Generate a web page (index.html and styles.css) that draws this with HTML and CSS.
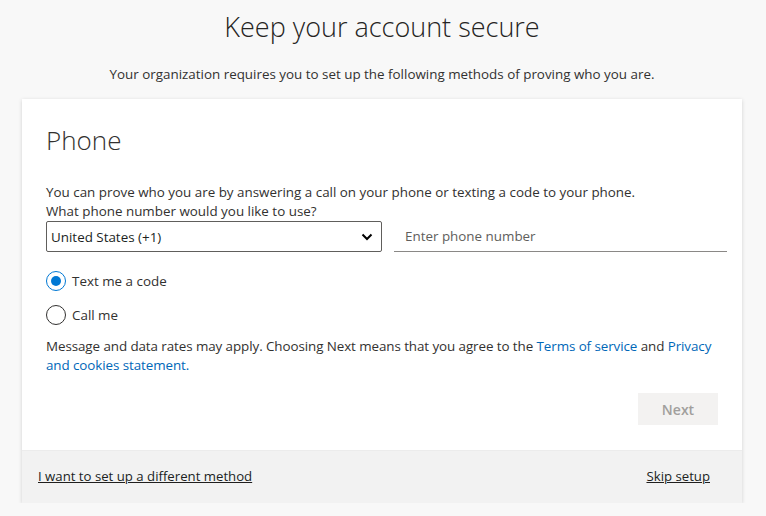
FILE: index.html
```html
<!DOCTYPE html>
<html lang="en">
<head>
  <meta charset="UTF-8" />
  <meta name="viewport" content="width=device-width, initial-scale=1.0" />
  <title>Keep your account secure</title>
  <link rel="stylesheet" href="styles.css">
</head>
<body>
  <div class="page">
    <header class="intro">
      <h1>Keep your account secure</h1>
      <p class="subtitle">Your organization requires you to set up the following methods of proving who you are.</p>
    </header>

    <div class="card">
      <div class="card-body">
        <h2>Phone</h2>
        <p class="lead">You can prove who you are by answering a call on your phone or texting a code to your phone.</p>
        <p class="question">What phone number would you like to use?</p>

        <div class="phone-row">
          <div class="country-select">
            <span>United States (+1)</span>
            <svg class="chevron" width="12" height="8" viewBox="0 0 12 8">
              <path d="M1.5 1.5 L6 6 L10.5 1.5" fill="none" stroke="#000" stroke-width="2"/>
            </svg>
          </div>
          <div class="phone-input">Enter phone number</div>
        </div>

        <label class="radio first">
          <span class="dot checked"></span>
          Text me a code
        </label>
        <label class="radio">
          <span class="dot"></span>
          Call me
        </label>

        <p class="terms">Message and data rates may apply. Choosing Next means that you agree to the <a href="#">Terms of service</a> and <a href="#">Privacy and cookies statement.</a></p>

        <div class="actions">
          <button class="next" disabled>Next</button>
        </div>
      </div>

      <footer class="card-footer">
        <a href="#">I want to set up a different method</a>
        <a href="#">Skip setup</a>
      </footer>
    </div>
  </div>
</body>
</html>
```

FILE: styles.css
```css
body {
  margin: 0;
  padding: 0;
  font-family: 'Segoe UI', 'Open Sans', 'Noto Sans', sans-serif;
  background-color: #f8f8f8;
  color: #323130;
  font-size: 13.4px;
}

.page {
  width: 720px;
  margin-left: 22px;
}

.intro {
  text-align: center;
}

h1 {
  margin: 0;
  padding-top: 8px;
  font-size: 27px;
  font-weight: 300;
  line-height: 38px;
  color: #252423;
}

.subtitle {
  margin: 18px 0 0;
  line-height: 20px;
}

.card {
  margin-top: 15px;
  background-color: #fff;
  box-shadow: 0 1px 4px rgba(0, 0, 0, 0.16);
}

.card-body {
  padding: 19px 24px 25px;
}

h2 {
  margin: 0;
  font-size: 26px;
  font-weight: 300;
  line-height: 44px;
  color: #323130;
}

.lead {
  margin: 21px 0 0;
  line-height: 19px;
}

.question {
  margin: 0;
  line-height: 19px;
}

.phone-row {
  display: flex;
  gap: 12px;
  margin-right: -9px;
}

.country-select {
  box-sizing: border-box;
  width: 336px;
  height: 31px;
  border: 1px solid #605e5c;
  border-radius: 2px;
  padding: 0 8px 0 4px;
  display: flex;
  align-items: center;
  justify-content: space-between;
  color: #201f1e;
}

.phone-input {
  flex: 1;
  box-sizing: border-box;
  height: 31px;
  border-bottom: 1px solid #8a8886;
  padding: 0 11px;
  display: flex;
  align-items: center;
  color: #605e5c;
}

.radio {
  display: flex;
  align-items: center;
  gap: 6px;
  height: 20px;
  margin-top: 14px;
}

.radio.first {
  margin-top: 19px;
}

.dot {
  box-sizing: border-box;
  width: 20px;
  height: 20px;
  border-radius: 50%;
  border: 1px solid #323130;
  display: flex;
  align-items: center;
  justify-content: center;
}

.dot.checked {
  border-color: #0078d4;
}

.dot.checked::after {
  content: "";
  width: 10px;
  height: 10px;
  border-radius: 50%;
  background-color: #0078d4;
}

.terms {
  margin: 12px 0 0;
  line-height: 19px;
  letter-spacing: -0.08px;
}

.terms a {
  color: #0067b8;
  text-decoration: none;
}

.actions {
  display: flex;
  justify-content: flex-end;
  margin-top: 18px;
}

.next {
  width: 80px;
  height: 32px;
  border: none;
  background-color: #f3f2f1;
  color: #a19f9d;
  font-family: inherit;
  font-size: 14px;
  font-weight: 600;
}

.card-footer {
  display: flex;
  justify-content: space-between;
  align-items: center;
  height: 53px;
  padding: 0 32px 2px 16px;
  box-sizing: border-box;
  background-color: #f2f2f2;
  border-top: 1px solid #ececec;
  font-size: 13.2px;
}

.card-footer a {
  color: #201f1e;
  text-decoration: underline;
}
```
